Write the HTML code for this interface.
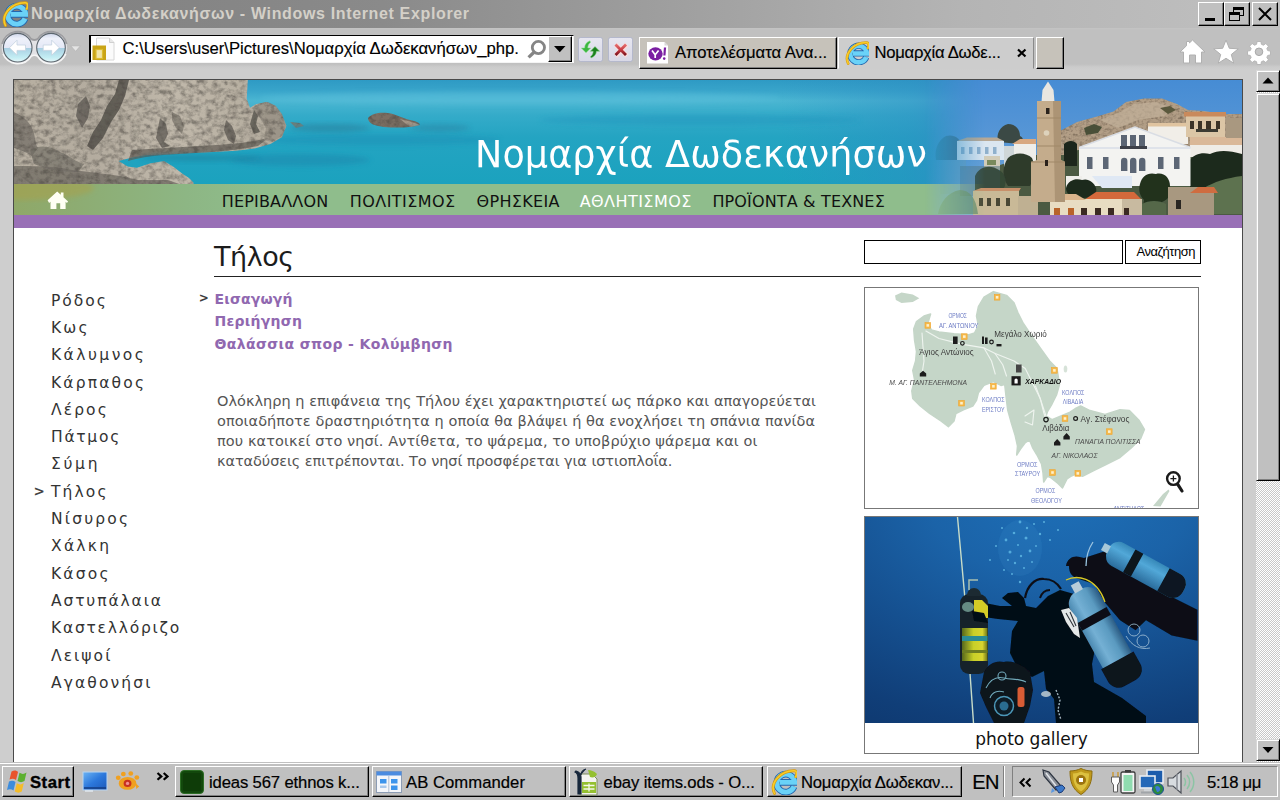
<!DOCTYPE html>
<html lang="el">
<head>
<meta charset="utf-8">
<title>Νομαρχία Δωδεκανήσων - Windows Internet Explorer</title>
<style>
*{box-sizing:border-box;margin:0;padding:0}
html,body{width:1280px;height:800px;overflow:hidden;background:#cecece}
body{position:relative;font-family:"Liberation Sans","DejaVu Sans",sans-serif;color:#000}
.abs{position:absolute}
/* ---------- window chrome ---------- */
#titlebar{left:0;top:0;width:1280px;height:28px;background:linear-gradient(90deg,#808080 0%,#8a8a8a 30%,#b4b4b4 75%,#c0c0c0 100%)}
#titletext{left:31px;top:4.2px;font:bold 16px/20px "Liberation Sans","DejaVu Sans",sans-serif;color:#d4d0c8;white-space:nowrap;letter-spacing:.65px}
.wbtn{top:2px;width:26px;height:24px;background:#c0c0c0;border:1px solid;border-color:#fff #000 #000 #fff;box-shadow:inset -1px -1px 0 #808080}
#toolbar{left:0;top:28px;width:1280px;height:42px;background:linear-gradient(180deg,#c4c4c4 0,#c0c0c0 2px,#c0c0c0 36px,#cbcbcb 39px,#cecece 42px)}
#addr{left:89px;top:35px;width:485px;height:28px;background:#fff;border:1px solid;border-width:1px 1px 1px 2px;border-color:#000 #f4f4f4 #f4f4f4 #000}
#addrtext{left:122.500px;top:38.600px;font:16.670px/20px "Liberation Sans","DejaVu Sans",sans-serif;white-space:nowrap;-webkit-text-stroke:.15px #000}
#addrdd{left:548px;top:36px;width:24px;height:26px;background:#c0c0c0;border:1px solid;border-color:#fff #000 #000 #fff;box-shadow:inset -1px -1px 0 #808080}
.tbtn{top:36.500px;width:25px;height:25px;background:linear-gradient(180deg,#e6e6f0,#d8d8e6);border:1px solid #b4b8cc;border-radius:2.500px}
.tab{top:37px;height:32px;background:#c6c2ba;border:1px solid;border-color:#fff #000 #000 #fff;box-shadow:inset -1px -1px 0 #808080}
.tabtext{top:42.700px;font:16.670px/20px "Liberation Sans","DejaVu Sans",sans-serif;white-space:nowrap;-webkit-text-stroke:.15px #000}
/* ---------- viewport ---------- */
#viewport{left:0;top:70px;width:1256px;height:692px;background:#cecece;overflow:hidden}
#page{left:13px;top:9px;width:1230px;height:700px;background:#fff;border:1px solid #4a4a4a;border-bottom:0}
#vscroll{left:1256px;top:70px;width:24px;height:692px;background-color:#fff;background-image:conic-gradient(#c8c8c8 25%,#fff 0 50%,#c8c8c8 0 75%,#fff 0);background-size:2px 2px}
.sbtn{left:0;width:24px;background:#c0c0c0;border:1px solid;border-color:#d8d8d8 #000 #000 #d8d8d8;box-shadow:inset 1px 1px 0 #fff,inset -1px -1px 0 #808080}
/* ---------- site ---------- */
.site{font-family:"DejaVu Sans","Liberation Sans",sans-serif}
#banner{left:0;top:0;width:1228px;height:104px;overflow:hidden}
#navbar{left:0;top:104px;width:1228px;height:31px;background:#8fbd8c}
#purple{left:0;top:135px;width:1228px;height:13px;background:#9970b6}
#sitetitle{left:461px;top:53.400px;font-size:36.500px;line-height:44px;color:#fff;white-space:nowrap}
.nav{top:111.800px;font-size:16px;line-height:20px;color:#111;white-space:nowrap}
#h1{left:200px;top:159.400px;font-size:27px;line-height:36px;color:#1c1c1c;white-space:nowrap;letter-spacing:-.45px}
#hr{left:200px;top:196px;width:987px;height:1px;background:#222}
.sub{left:200.500px;font-weight:bold;font-size:14px;line-height:20px;color:#9068b0;white-space:nowrap}
.side{left:37px;font-size:15.500px;line-height:20px;color:#333;letter-spacing:2.1px;white-space:nowrap}
#para{left:203px;top:311.200px;width:640px;white-space:nowrap;font-size:14.5px;line-height:20px;color:#555}
#search{left:850px;top:160px;width:259px;height:24px;border:1px solid #000;background:#fff}
#sbtn{left:1111px;top:160px;width:76px;height:24px;border:1px solid #000;background:#fff;font:13px/21px "Liberation Sans",sans-serif;text-align:left;padding-left:10.500px;letter-spacing:-.47px;white-space:nowrap}
#mapbox{left:850px;top:207px;width:335px;height:222px;border:1px solid #777;background:#fff;overflow:hidden}
#photobox{left:850px;top:436px;width:335px;height:238px;border:1px solid #777;background:#fff;overflow:hidden}
#caption{left:0;top:211.100px;width:333px;text-align:center;font-size:17px;line-height:22px;color:#111}
/* ---------- taskbar ---------- */
#taskbar{left:0;top:762px;width:1280px;height:38px;background:#c0c0c0;border-top:1px solid #c0c0c0;box-shadow:inset 0 1px 0 #fff}
.tbut{top:766px;height:31px;background:#c0c0c0;border:1px solid;border-color:#fff #000 #000 #fff;box-shadow:inset -1px -1px 0 #808080}
.ttext{top:772px;font:16.670px/22px "Liberation Sans","DejaVu Sans",sans-serif;white-space:nowrap;-webkit-text-stroke:.2px #000}
#tray{left:1012px;top:766px;width:266px;height:31px;border:1px solid;border-color:#808080 #fff #fff #808080}
</style>
</head>
<body>
<!-- ======= TITLE BAR ======= -->
<div id="titlebar" class="abs"></div>
<svg class="abs" style="left:1.500px;top:1px" width="26" height="26" viewBox="0 0 24 24"><path d="M21.3 16.2A8.3 8.3 0 1 1 21.9 12.4L8 12.4" fill="none" stroke="#2467ae" stroke-width="6.2"/><path d="M21.3 16.2A8.3 8.3 0 1 1 21.9 12.4L8 12.4" fill="none" stroke="#6ad2f8" stroke-width="4.5"/><path d="M3.2 22.6C-1.5 13 9 1.2 21.6 1.6c2.6.3 2.4 3 1.3 5.6" fill="none" stroke="#d89a10" stroke-width="2.6" stroke-linecap="round"/><path d="M3.2 22.6C-1.5 13 9 1.2 21.6 1.6c2.6.3 2.4 3 1.3 5.6" fill="none" stroke="#f8cc28" stroke-width="1.5" stroke-linecap="round"/></svg>
<div id="titletext" class="abs">Νομαρχία Δωδεκανήσων - Windows Internet Explorer</div>
<div class="abs wbtn" style="left:1198px"><svg class="abs" style="left:0;top:0" width="24" height="22" viewBox="0 0 24 22"><rect x="6" y="15" width="10" height="3" fill="#000"/></svg></div>
<div class="abs wbtn" style="left:1224px"><svg class="abs" style="left:0;top:0" width="24" height="22" viewBox="0 0 24 22"><g fill="none" stroke="#000"><rect x="8.5" y="4.5" width="10" height="8"/><path d="M8 5.5h11M8 6.5h11" /><rect x="4.500" y="9.500" width="10" height="8" fill="#c0c0c0"/><path d="M4 10.500h11M4 11.500h11"/></g></svg></div>
<div class="abs wbtn" style="left:1252px"><svg class="abs" style="left:0;top:0" width="24" height="22" viewBox="0 0 24 22"><path d="M6 5l12 12M18 5L6 17" stroke="#000" stroke-width="2" fill="none"/></svg></div>
<!-- ======= TOOLBAR ======= -->
<div id="toolbar" class="abs"></div>
<svg class="abs" style="left:0;top:30px" width="90" height="38" viewBox="0 30 90 38">
 <defs>
  <linearGradient id="glass" x1="0" y1="0" x2="0" y2="1"><stop offset="0" stop-color="#cfd6ea"/><stop offset=".18" stop-color="#eef1fa"/><stop offset=".5" stop-color="#e4e8f6"/><stop offset=".52" stop-color="#a9cfe2"/><stop offset=".85" stop-color="#c4eef4"/><stop offset="1" stop-color="#e6f6f8"/></linearGradient>
 </defs>
 <path d="M17.700 31.700a16 16 0 0 1 13.500 7.500q3.200 1.800 6.400 0a16 16 0 1 1 0 17q-3.200-1.800-6.400 0a16 16 0 1 1-13.500-24.500z" fill="#e6e6e9" opacity=".9"/>
 <path d="M2.200 44a16 16 0 0 1 29-4.800q3.200 1.800 6.400 0a16 16 0 0 1 29 4.800" fill="none" stroke="#8e8e92" stroke-width="2" opacity=".75"/>
 <path d="M3 54a16 16 0 0 0 28.200 2.200q3.200-1.800 6.400 0a16 16 0 0 0 28.200-2.200" fill="none" stroke="#fafafa" stroke-width="1.600" opacity=".9"/>
 <circle cx="17.700" cy="47.700" r="14.300" fill="url(#glass)" stroke="#5c666e" stroke-width="1.100"/>
 <circle cx="51" cy="47.700" r="14.300" fill="url(#glass)" stroke="#5c666e" stroke-width="1.100"/>
 <path d="M9.500 47.700l7.500-7.500v4.800h8.500v5.400H17v4.800z" fill="#fff" stroke="#c4d2e0" stroke-width=".8"/>
 <path d="M59.200 47.700l-7.500-7.500v4.800h-8.500v5.400h8.500v4.800z" fill="#fff" stroke="#c4d2e0" stroke-width=".8"/>
 <path d="M70.700 45.800h9.800l-4.900 5.600z" fill="#e4e4e4" stroke="#b4b4b4" stroke-width=".8"/>
</svg>
<div id="addr" class="abs"></div>
<svg class="abs" style="left:91px;top:37px" width="26" height="24" viewBox="0 0 26 24"><path d="M5.500 1h13l4.500 4.500V23h-17.500z" fill="#fbfbfb" stroke="#d8d8d8"/><path d="M18.500 1v4.500H23" fill="#e8e8e8" stroke="#d0d0d0"/><rect x="1.500" y="8.500" width="13.500" height="14.500" fill="#c9a416"/><rect x="5" y="12.500" width="6.500" height="9" fill="#f0e4a8" stroke="#dcbc30" stroke-width="1.200"/></svg>
<div id="addrtext" class="abs">C:\Users\user\Pictures\Νομαρχία Δωδεκανήσων_php.</div>
<svg class="abs" style="left:524px;top:38px" width="24" height="24" viewBox="0 0 24 24"><circle cx="14.400" cy="9.500" r="6.100" fill="none" stroke="#858585" stroke-width="2.800"/><path d="M10 14.200L4.600 19.400" stroke="#858585" stroke-width="3.300" stroke-linecap="butt"/></svg>
<div id="addrdd" class="abs"><svg class="abs" style="left:0;top:0" width="22" height="24" viewBox="0 0 22 24"><path d="M5 9h11.500l-5.750 6.200z" fill="#000"/></svg></div>
<div class="abs tbtn" style="left:578px"><svg class="abs" style="left:0;top:0" width="23" height="23" viewBox="0 0 23 23"><path d="M11 2.800C7.500 4 5.600 6.800 5.600 10H2.300l4.700 4.800L11.700 10H8.800c0-2.400.9-4.400 2.700-5.600z" fill="#3cb640" stroke="#8fe08f" stroke-width=".5"/><path d="M12 20c3.500-1.200 5.400-3.800 5.400-6.700h3.300L16 8.600l-4.700 4.700h2.900c0 2.200-.9 4-2.700 5.200z" fill="#1c801e" stroke="#7fd07f" stroke-width=".5"/></svg></div>
<div class="abs tbtn" style="left:608px"><svg class="abs" style="left:0;top:0" width="23" height="23" viewBox="0 0 23 23"><defs><linearGradient id="rx" x1="0" y1="0" x2="0" y2="1"><stop offset="0" stop-color="#e87878"/><stop offset=".5" stop-color="#c83c44"/><stop offset="1" stop-color="#6c0c18"/></linearGradient></defs><path d="M6.500 6.500l11.500 11.500M18 6.500L6.500 18" stroke="#f8dcdc" stroke-width="4.600" stroke-linecap="butt"/><path d="M5.500 7.500l2-2 4.250 4.250L16 5.500l2 2-4.250 4.250L18 16l-2 2-4.250-4.250L7.500 18l-2-2 4.250-4.250z" fill="url(#rx)"/></svg></div>
<div class="abs tab" style="left:639px;width:198px"></div>
<svg class="abs" style="left:646px;top:41px" width="24" height="24" viewBox="0 0 24 24"><path d="M1 1h17.500l3.500 3.500V22.500H1z" fill="#fff"/><path d="M18.500 1v3.500H22z" fill="#d8d8d8"/><ellipse cx="9.500" cy="12.800" rx="7.200" ry="6.600" fill="#7b1fa2"/><path d="M6 9.500l3.200 4.200v3.200M12.600 9.500L9.200 13.700" stroke="#fff" stroke-width="1.700" fill="none"/><path d="M19 6.500l-.6 8" stroke="#7b1fa2" stroke-width="2.200"/><circle cx="18.200" cy="17.600" r="1.300" fill="#7b1fa2"/></svg>
<div class="abs tabtext" style="left:675px;letter-spacing:-.05px">Αποτελέσματα Ανα...</div>
<div class="abs tab" style="left:838px;width:196px;background:#cdcdcd;border-color:#fff #8a8a8a transparent #fff;box-shadow:none"></div>
<svg class="abs" style="left:845px;top:41px" width="24" height="24" viewBox="0 0 24 24"><path d="M21.3 16.2A8.3 8.3 0 1 1 21.9 12.4L8 12.4" fill="none" stroke="#2467ae" stroke-width="6.2"/><path d="M21.3 16.2A8.3 8.3 0 1 1 21.9 12.4L8 12.4" fill="none" stroke="#6ad2f8" stroke-width="4.5"/><path d="M3.2 22.6C-1.5 13 9 1.2 21.6 1.6c2.6.3 2.4 3 1.3 5.6" fill="none" stroke="#d89a10" stroke-width="2.6" stroke-linecap="round"/><path d="M3.2 22.6C-1.5 13 9 1.2 21.6 1.6c2.6.3 2.4 3 1.3 5.6" fill="none" stroke="#f8cc28" stroke-width="1.5" stroke-linecap="round"/></svg>
<div class="abs tabtext" style="left:874.500px;letter-spacing:-.28px">Νομαρχία Δωδε...</div>
<svg class="abs" style="left:1016px;top:47px" width="12" height="12" viewBox="0 0 12 12"><path d="M2 2.500l7.500 7M9.500 2.500l-7.500 7" stroke="#000" stroke-width="2.200"/></svg>
<div class="abs tab" style="left:1036px;width:28px"></div>
<svg class="abs" style="left:1176px;top:36px" width="100" height="32" viewBox="1176 36 100 32"><g fill="#fff" stroke="#b0b0b0" stroke-width="1">
 <path d="M1192.500 40l12.500 12h-3.500v11h-6v-8h-6v8h-6V52h-3.500l6.500-6.300V41.500h3v1.400z"/>
 <path d="M1226 40l3.300 8.300 9 .5-7 5.700 2.400 8.700-7.700-4.900-7.700 4.900 2.400-8.700-7-5.700 9-.5z"/>
 <g transform="translate(1259 51.800) scale(.87) translate(-1259 -51.800)"><path d="M1256.800 40h4.400l.6 3.200 2.300 1 2.700-1.900 3.100 3.100-1.900 2.700 1 2.300 3.200.6v4.400l-3.200.6-1 2.300 1.900 2.700-3.100 3.100-2.700-1.900-2.300 1-.6 3.200h-4.400l-.6-3.200-2.300-1-2.700 1.900-3.100-3.100 1.900-2.700-1-2.300-3.200-.6v-4.400l3.200-.6 1-2.300-1.900-2.700 3.100-3.100 2.700 1.900 2.300-1z"/></g></g>
 <circle cx="1259" cy="51.800" r="3.800" fill="#c4c4c4" stroke="#a8a8a8"/></svg>
<!-- ======= VIEWPORT ======= -->
<div id="viewport" class="abs">
 <div id="page" class="abs site">
  <div id="banner" class="abs" style="height:135px">
<svg class="abs" style="left:0;top:0" width="1228" height="135" viewBox="14 80 1228 135">
 <defs>
  <linearGradient id="sea" x1="0" y1="0" x2="0" y2="1">
   <stop offset="0" stop-color="#2e9ac4"/><stop offset=".1" stop-color="#38a4ca"/><stop offset=".2" stop-color="#4bb6d2"/><stop offset=".34" stop-color="#34abc9"/><stop offset=".55" stop-color="#24a4c2"/><stop offset="1" stop-color="#1ba2be"/>
  </linearGradient>
  <linearGradient id="seaR" x1="0" y1="0" x2="1" y2="0">
   <stop offset="0" stop-color="#2e8cc4" stop-opacity="0"/><stop offset=".6" stop-color="#2e8cc4" stop-opacity=".45"/><stop offset="1" stop-color="#3f86c8" stop-opacity="1"/>
  </linearGradient>
  <linearGradient id="navg" x1="0" y1="0" x2="1" y2="0">
   <stop offset="0" stop-color="#8fa868"/><stop offset=".05" stop-color="#8dac72"/><stop offset=".14" stop-color="#8db684"/><stop offset=".2" stop-color="#8fbd8c"/><stop offset="1" stop-color="#8fbd8c"/>
  </linearGradient>
  <linearGradient id="fadeL" x1="0" y1="0" x2="1" y2="0">
   <stop offset="0" stop-color="#fff" stop-opacity="0"/><stop offset="1" stop-color="#fff" stop-opacity="1"/>
  </linearGradient>
  <mask id="vmask" maskUnits="userSpaceOnUse" x="900" y="80" width="342" height="135"><rect x="925" y="80" width="60" height="135" fill="url(#fadeL)"/><rect x="985" y="80" width="257" height="135" fill="#fff"/></mask>
  <linearGradient id="sky" x1="0" y1="0" x2="0" y2="1"><stop offset="0" stop-color="#468cd4"/><stop offset=".5" stop-color="#5a98d6"/><stop offset="1" stop-color="#7fb0dc"/></linearGradient>
  <linearGradient id="rockg" x1="0" y1="0" x2="1" y2="0"><stop offset="0" stop-color="#b8b0a2"/><stop offset=".3" stop-color="#b4ac9f"/><stop offset=".6" stop-color="#c0b8aa"/><stop offset="1" stop-color="#b2aa9c"/></linearGradient>
  <filter id="rough2" x="0" y="0" width="100%" height="100%"><feTurbulence type="fractalNoise" baseFrequency=".3 .35" numOctaves="2" seed="3" result="n"/><feColorMatrix in="n" type="matrix" values="0 0 0 0 0  0 0 0 0 0  0 0 0 0 0  1.800 1.500 0 0 -1.450" result="a"/><feFlood flood-color="#5a4a3a" flood-opacity=".7"/><feComposite operator="in" in2="a" result="dark"/><feComposite in="dark" in2="SourceGraphic" operator="atop"/></filter>
  <clipPath id="navclip"><rect x="14" y="184" width="1228" height="31"/></clipPath>
  <filter id="b1" x="-5%" y="-5%" width="110%" height="110%"><feGaussianBlur stdDeviation=".7"/></filter>
  <filter id="rough" x="0" y="0" width="100%" height="100%"><feTurbulence type="fractalNoise" baseFrequency=".16 .2" numOctaves="3" seed="7" result="n"/><feColorMatrix in="n" type="matrix" values="0 0 0 0 0  0 0 0 0 0  0 0 0 0 0  1.900 1.600 0 0 -1.450" result="a"/><feFlood flood-color="#4e4943" flood-opacity=".68"/><feComposite operator="in" in2="a" result="dark"/><feGaussianBlur in="SourceGraphic" stdDeviation=".7" result="src"/><feComposite in="dark" in2="src" operator="atop"/></filter>
  <filter id="b3" x="-10%" y="-10%" width="120%" height="120%"><feGaussianBlur stdDeviation="2.500"/></filter>
 </defs>
 <!-- sea -->
 <rect x="14" y="80" width="1228" height="104" fill="url(#sea)"/>
 <rect x="780" y="80" width="220" height="104" fill="url(#seaR)"/>
 <g filter="url(#b3)" opacity=".5"><ellipse cx="520" cy="98" rx="260" ry="6" fill="#5cc0dc"/><ellipse cx="380" cy="140" rx="120" ry="5" fill="#1c8fb6"/><ellipse cx="700" cy="120" rx="160" ry="5" fill="#2496be"/><ellipse cx="300" cy="160" rx="70" ry="6" fill="#1a86ac"/></g>
 <!-- rocks -->
 <g filter="url(#rough)">
  <path d="M13 79H247.900l-1.200 19.700 3.300 9 5.800-3.400 10.200-2.300 9 3.500 6.900 9 4.500 11.300-4.500 11.400-11.400 6.800-15.800 4.500-18.200 2.300-22.600 1.100-22.700 1.100-22.600 1.200-22.700 1.100-13.600 2.300-13.600 3.400 9.100 5.600 9.100 1.200 13.600-4.600 13.500-2.200 9.100 5.600 9.100 6.800 6.800 4.500 4.500 4.600V185H13z" fill="url(#rockg)"/>
  <path d="M119 80l-4 14-8 12-6 14-8 12-6 14 6 4 10-12 8-16 8-12 6-14 4-16z" fill="#4e4a45" opacity=".8"/>
  <path d="M86 96l-8 8-2 12 6 12 6-10 2-12z" fill="#5a5650" opacity=".75"/>
  <path d="M14 112c8 4 14 8 18 16 4 8 2 14 6 20l-6 8c-6-4-12-6-18-8z" fill="#6f6b64" opacity=".7"/>
  <path d="M30 150c10-6 22-4 30 2 10 4 16 10 24 12l-6 8c-14 0-30-2-44-8z" fill="#6b675f" opacity=".6"/>
  <path d="M160 118l6 6 2 10-4 8 6 4-8 2-6-10 2-10z" fill="#55514b" opacity=".7"/>
  <path d="M172 112l8 4 4 10-2 8-6-6-4-8z" fill="#6a655d" opacity=".6"/>
  <path d="M226 120l6 6 4 10-2 8-6-4-4-10z" fill="#55514b" opacity=".7"/>
  <path d="M132 150c28-2 56-3 84-5 18-1 36-3 52-7l-10 8c-30 6-62 7-94 9-14 1-26 3-36 6z" fill="#5f5b54" opacity=".7"/>
  <path d="M14 166c20 0 40 0 58 4 18 2 34 4 48 6l18 4 30 0 14 5H14z" fill="#6f6a62" opacity=".75"/>
  <path d="M252 108l6-4 10-2 8 4 6 8 4 12-4 10-10 6-8-2 2-12-6-10z" fill="#938c80" opacity=".7"/>
  <path d="M254 110l4 6-2 8 4 8-6 2-4-10z" fill="#4c4843" opacity=".7"/>
  <path d="M368 118c4-5 12-6 20-5 8 1 14 5 22 7 6 1 10 3 10 5-10 3-24 3-36 2-8-1-16-3-16-9z" fill="#7c6e62"/>
  <path d="M400 119l12 3 8 3-10 2z" fill="#b0a090" opacity=".8"/>
  <path d="M290 122l10 1 4 3-8 2z" fill="#8a7a6c" opacity=".8"/>
 </g>
 <g filter="url(#b3)" opacity=".55"><ellipse cx="330" cy="128" rx="40" ry="4" fill="#2a7f9c"/><ellipse cx="440" cy="128" rx="30" ry="3.500" fill="#2a86a6"/><ellipse cx="200" cy="158" rx="60" ry="3" fill="#1b7f9c"/></g>
 <!-- nav bar -->
 <rect x="14" y="184" width="1228" height="31" fill="url(#navg)"/>
 <g clip-path="url(#navclip)"><ellipse cx="24" cy="188" rx="70" ry="12" fill="#a8a04c" opacity=".55" filter="url(#b3)"/></g>
 <!-- village -->
 <g mask="url(#vmask)">
  <rect x="920" y="80" width="322" height="135" fill="url(#sky)"/>
  <g filter="url(#b1)">
   <g filter="url(#rough2)"><path d="M1058 132l19-10 20-5.500 16.500-5 12.500-9.500 18-3.500h18l15 5.500 11 6 16 1 20 3h18v60H1058z" fill="#b29e86"/></g>
   <path d="M1100 120l20-8 14-8 22-2 18 6-10 8-26 4-20 8z" fill="#c2b09a" opacity=".7"/>
   <path d="M1084 128l10-4 8 3-4 6-12 2z" fill="#4a5038"/><path d="M1160 108l10-2 6 4-8 4z" fill="#5a583c"/>
   <path d="M1000 215v-50l30-10h34l14-5h112l52 8v57z" fill="#4c5a42"/>
   <!-- far houses -->
   <rect x="1148" y="124" width="40" height="20" fill="#f1eee8"/><rect x="1148" y="123" width="38" height="3.500" fill="#e0c4a0"/>
   <rect x="1186" y="116" width="39" height="21" fill="#dcc6a6"/><rect x="1184" y="112" width="42" height="4.500" fill="#c98a5c"/>
   <g fill="#3a3026"><rect x="1190" y="121" width="4" height="8"/><rect x="1198" y="121" width="4" height="8"/><rect x="1206" y="121" width="5" height="8"/><rect x="1216" y="121" width="4" height="8"/></g>
   <rect x="1196" y="129" width="22" height="3" fill="#3c3a30"/>
   <rect x="1190" y="137" width="52" height="8" fill="#dab898"/><rect x="1190" y="145" width="52" height="12" fill="#efece6"/>
   <rect x="1226" y="118" width="16" height="20" fill="#a99880"/>
   <!-- dark trees right -->
   <path d="M1190 160c4-6 12-8 20-6 8-4 18-4 32 0v34h-52z" fill="#1d2a1c"/>
   <path d="M1186 214c0-14 6-24 18-26 10-6 22-10 38-12v38z" fill="#5d7250"/>
   <!-- mansion -->
   <path d="M1079 147.500L1135 127l55.500 20.500V186H1079z" fill="#f3f3f1"/>
   <path d="M1079 147.500L1135 127l55.500 20.500" fill="none" stroke="#d9dde4" stroke-width="1.500"/>
   <rect x="1079" y="147" width="111.500" height="2" fill="#dfe3ea"/>
   <g fill="#5c6674"><rect x="1121" y="135" width="6" height="14"/><rect x="1130" y="135" width="6" height="14"/><rect x="1139" y="135" width="6" height="14"/>
   <rect x="1087" y="157" width="5.500" height="12"/><rect x="1103" y="157" width="5.500" height="12"/><rect x="1158" y="157" width="5.500" height="12"/><rect x="1174" y="157" width="5.500" height="12"/>
   <path d="M1121 171v-10a3.200 3.200 0 0 1 6.400 0v10zM1130 173v-12a3.200 3.200 0 0 1 6.400 0v12zM1139 171v-10a3.200 3.200 0 0 1 6.400 0v10z"/></g>
   <rect x="1120" y="146" width="27" height="3" fill="#3c4048"/>
   <path d="M1092 176h40v12h-30z" fill="#dfe8f4"/>
   <rect x="1066" y="176" width="16" height="12" fill="#efeeea"/>
   <!-- trees mid -->
   <path d="M1064 144c4-4 10-4 13 0v22h-13z" fill="#1c261c"/>
   <path d="M1066 188c2-8 10-10 16-8 6-2 12 2 14 8 2 6-4 10-12 10-10 0-18-2-18-10z" fill="#1f2c1e"/>
   <path d="M1140 184c2-8 8-12 16-10 8-2 14 4 14 12 2 8-2 14-8 16l2 12h-22l2-14c-4-4-6-10-4-16z" fill="#22301f"/>
   <path d="M1142 204c6-4 18-4 24 0v11h-24z" fill="#54684a"/>
   <!-- low buildings -->
   <rect x="1168" y="187" width="46" height="28" fill="#a89880"/><path d="M1190 193l8-6h16l4 6z" fill="#cf6c40"/><rect x="1176" y="200" width="5" height="9" fill="#2c2620"/>
   <path d="M1084 200l12-8h38l8 8z" fill="#d4693a"/>
   <rect x="1050" y="199" width="74" height="16" fill="#e8dcc2"/><rect x="1122" y="199" width="20" height="16" fill="#c8baa0"/>
   <path d="M1048 200l14-6h14l10 6z" fill="#d9b48c"/>
   <g fill="#b8642c"><rect x="1054" y="208" width="6" height="7"/><rect x="1068" y="208" width="6" height="7"/></g><g fill="#3a2c24"><rect x="1081" y="208" width="6" height="7"/><rect x="1095" y="208" width="6" height="7"/><rect x="1108" y="208" width="6" height="7"/><rect x="1124" y="208" width="5" height="7"/></g>
   <!-- left part -->
   <path d="M936 160c-2-10 2-20 10-24 8-2 14 2 16 10l-2 14z" fill="#2c4a50" opacity=".55"/>
   <path d="M998 142c-2-8 2-16 10-18 8 0 12 6 12 12 4 2 4 6 0 8z" fill="#3b4a44"/>
   <rect x="957" y="141" width="47" height="19" fill="#dbe6f0"/><path d="M957 141l10-3.500h30l7 3.500z" fill="#b8a894"/>
   <g fill="#8fb0cc"><rect x="961" y="147" width="3.500" height="7"/><rect x="969" y="147" width="3.500" height="7"/><rect x="977" y="147" width="3.500" height="7"/><rect x="985" y="147" width="3.500" height="7"/><rect x="993" y="147" width="3.500" height="7"/></g>
   <rect x="1004" y="146" width="12" height="22" fill="#cfd6d8"/>
   <rect x="1014" y="144" width="22" height="17" fill="#eeeeea"/><path d="M1012 144l8-5h16v5z" fill="#d8a880"/>
   <rect x="984" y="156" width="16" height="14" fill="#d2ccb8"/><rect x="987" y="160" width="9" height="5" fill="#7a8a5c"/>
   <path d="M940 160h26v10h-6v24h-20z" fill="#6fa2b8" opacity=".5"/>
   <path d="M960 166h40v30h-40z" fill="#5a7a84" opacity=".55"/>
   <path d="M1008 158c6-6 18-6 24 0 4 8 2 20-2 28h-22c-6-8-6-20 0-28z" fill="#2d3b2c"/>
   <path d="M975 176c4-10 16-12 24-6 8 4 8 14 4 20h-28z" fill="#344634" opacity=".9"/>
   <rect x="973" y="191" width="46" height="24" fill="#c9b997"/><path d="M973 191l8-3h40l-2 3z" fill="#c8906a"/>
   <g fill="#4a4636"><rect x="979" y="198" width="4" height="8"/><rect x="987" y="198" width="4" height="8"/><rect x="996" y="198" width="4" height="8"/><rect x="1006" y="198" width="4" height="8"/></g>
   <path d="M938 214c2-12 10-22 22-24 10 0 16 8 18 24z" fill="#5c8468" opacity=".7"/>
   <rect x="1018" y="196" width="20" height="19" fill="#bfb092"/>
   <!-- tower -->
   <path d="M1041.500 102l1-12 5.500-8.500 5.500 8.500 1 12z" fill="#e9e6e0"/>
   <path d="M1037 101h24v59l4 2v40h-34v-40l6-2z" fill="#c4ac8c"/>
   <path d="M1053 101h8v59l4 2v40h-10z" fill="#a48c6e" opacity=".75"/>
   <path d="M1037 118h24M1037 146h24M1031 162h34" stroke="#a08868" stroke-width="1"/>
   <rect x="1046" y="108" width="3.500" height="6" fill="#2c241c"/><rect x="1045" y="160" width="3" height="6" fill="#2c241c"/><circle cx="1046.500" cy="133" r="2.800" fill="#ddd2bc"/>
  </g>
 </g>
 <!-- nav home icon -->
 <path d="M47.600 200.300l9.600-8.800 3.600 3.300v-2.200h2.700v4.700l4.600 4.200-1.200 1.400-1.300-1.200v7.400h-5.400v-5.800h-3.800v5.800h-5.900v-7.400l-1.400 1.200z" fill="#fffff4"/>
</svg>
  </div>
  <div id="purple" class="abs"></div>
  <div id="sitetitle" class="abs" style="letter-spacing:.1px">Νομαρχία Δωδεκανήσων</div>
  <div class="abs nav" style="left:207.800px;letter-spacing:.16px">ΠΕΡΙΒΑΛΛΟΝ</div>
  <div class="abs nav" style="left:335.800px;letter-spacing:.44px">ΠΟΛΙΤΙΣΜΟΣ</div>
  <div class="abs nav" style="left:462.600px;letter-spacing:.33px">ΘΡΗΣΚΕΙΑ</div>
  <div class="abs nav" style="left:565.700px;letter-spacing:.44px;color:#fff">ΑΘΛΗΤΙΣΜΟΣ</div>
  <div class="abs nav" style="left:698.400px;letter-spacing:.15px">ΠΡΟΪΟΝΤΑ &amp; ΤΕΧΝΕΣ</div>
  <div id="h1" class="abs">Τήλος</div>
  <div id="hr" class="abs"></div>
  <div id="search" class="abs"></div>
  <div id="sbtn" class="abs">Αναζήτηση</div>
  <div class="abs sub" style="left:184.800px;top:208px;color:#3c3c3c;font-size:12px">&gt;</div>
  <div class="abs sub" style="top:208.800px;letter-spacing:.18px">Εισαγωγή</div>
  <div class="abs sub" style="top:231.300px;letter-spacing:.27px">Περιήγηση</div>
  <div class="abs sub" style="top:253.600px;letter-spacing:.38px">Θαλάσσια σπορ - Κολύμβηση</div>
  <div id="para" class="abs"><span style="letter-spacing:.02px">Ολόκληρη η επιφάνεια της Τήλου έχει χαρακτηριστεί ως πάρκο και απαγορεύεται</span><br><span style="letter-spacing:.05px">οποιαδήποτε δραστηριότητα η οποία θα βλάψει ή θα ενοχλήσει τη σπάνια πανίδα</span><br><span style="letter-spacing:.09px">που κατοικεί στο νησί. Αντίθετα, το ψάρεμα, το υποβρύχιο ψάρεμα και οι</span><br><span style="letter-spacing:-.08px">καταδύσεις επιτρέπονται. Το νησί προσφέρεται για ιστιοπλοΐα.</span></div>
  <div class="abs side" style="top:210.6px;letter-spacing:1.96px">Ρόδος</div>
  <div class="abs side" style="top:237.9px;letter-spacing:2.12px">Κως</div>
  <div class="abs side" style="top:265.2px;letter-spacing:2.45px">Κάλυμνος</div>
  <div class="abs side" style="top:292.5px;letter-spacing:2.17px">Κάρπαθος</div>
  <div class="abs side" style="top:319.8px;letter-spacing:2.09px">Λέρος</div>
  <div class="abs side" style="top:347.1px;letter-spacing:1.72px">Πάτμος</div>
  <div class="abs side" style="top:374.4px;letter-spacing:2.68px">Σύμη</div>
  <div class="abs side" style="left:19.500px;top:401.2px;font-weight:bold;font-size:13.500px;letter-spacing:0;color:#444">&gt;</div>
  <div class="abs side" style="top:401.7px;letter-spacing:2.11px">Τήλος</div>
  <div class="abs side" style="top:429.0px;letter-spacing:2.16px">Νίσυρος</div>
  <div class="abs side" style="top:456.3px;letter-spacing:2.26px">Χάλκη</div>
  <div class="abs side" style="top:483.6px;letter-spacing:2.18px">Κάσος</div>
  <div class="abs side" style="top:510.9px;letter-spacing:1.87px">Αστυπάλαια</div>
  <div class="abs side" style="top:538.2px;letter-spacing:1.77px">Καστελλόριζο</div>
  <div class="abs side" style="top:565.5px;letter-spacing:2.04px">Λειψοί</div>
  <div class="abs side" style="top:592.8px;letter-spacing:2.11px">Αγαθονήσι</div>
  <div id="mapbox" class="abs">
<svg class="abs" style="left:0;top:0" width="333" height="220" viewBox="865 288 333 220">
 <defs><filter id="mb" x="-5%" y="-5%" width="110%" height="110%"><feGaussianBlur stdDeviation=".45"/></filter></defs>
 <g filter="url(#mb)">
 <g fill="#c5d6c8">
  <path d="M993.4 291.6 1006.5 295.4 1014 302.9 1017.75 312.25 1023.4 323.5 1030.9 334.75 1040.25 347.9 1049.6 361 1057 368.5 1059.5 384.5 1056.5 395 1052 404 1047.5 411.5 1046 416 1052 419.7 1061 416 1070 412.2 1075 408.75 1080.6 406 1090 410.6 1105 414.4 1120 409.7 1129.4 410.6 1138.75 420 1144.4 429.4 1140.6 438.75 1131.25 448 1120 457.5 1105 465 1093.75 470.6 1082.5 476.25 1075 474.4 1071.5 476 1067 479 1062.5 488 1058 483.5 1050.5 477.5 1047.5 476 1043.7 482 1043 473 1041.5 464 1037 455 1032.5 447.5 1029.5 440 1025 443 1020.5 449 1016.7 455 1017.5 446 1015.2 435.5 1011.5 423.5 1007.7 410 1006.2 398 1004.7 384.5 1000.9 385.4 993.4 381.6 984 385.4 978.4 392.9 976.5 400.4 972.75 406 963.4 409.75 955.9 413.5 954 421 948.4 426.6 940.9 421 929.6 413.5 920.25 406 912.75 398.5 911.8 391 914.6 379.75 912.75 370.4 915.6 361 916.5 351.6 914.6 340.4 913.7 329 916.5 321.6 924 316 930.6 314 927.75 323.5 931.5 330 939 331.9 954 333.8 969 334.75 974.6 332.9 978.4 325.4 976.5 316 978.4 306.6 984 297.25z" stroke="#c5d6c8" stroke-width="1.500" stroke-linejoin="round"/>
  <path d="M895 295.400l6.500-2.800 11.250 1.800 6.550 3.800-6.550 3.800-11.250.900-5.600-2.900z"/>
  <path d="M1153 506l10-12 5.500-4.500 1 1.500-7 12-2 3.500z"/>
  <ellipse cx="1065.500" cy="369" rx="1.800" ry="3.500" opacity=".7"/>
 </g>
 <g fill="none" stroke="#f4f8f4" stroke-width="1.100" stroke-linecap="round" stroke-linejoin="round" opacity=".9">
  <path d="M925.900 331l13.100 7.500 22.500 5.600 22.500 3.800 11.250 5.600 18.750 7.500 11.250 7.500 7.500 15 7.500 15 3.750 15 2 5.500"/>
  <path d="M984 347.900l7.500 13.100 3.750 13"/><path d="M922 333l2 28-2 13"/><path d="M995 353.500l7.750 11.250 3.750 11.250"/>
  <path d="M1035.500 386l4.500 12 3 9 3 9"/><path d="M1025 416l9-6-1.500 15-7.500-3"/>
 </g>
 <g fill="#f6b94a" stroke="#f2a52c" stroke-width=".6">
  <rect x="994.300" y="294.500" width="5.600" height="5.600"/><rect x="925" y="322.600" width="5.600" height="5.600"/><rect x="961.500" y="333.800" width="5.600" height="5.600"/><rect x="1051.600" y="367.600" width="5.600" height="5.600"/><rect x="990.600" y="383.500" width="5.600" height="5.600"/><rect x="958.700" y="400.400" width="5.600" height="5.600"/><rect x="1062.200" y="415.700" width="5.600" height="5.600"/><rect x="1106.500" y="428.800" width="5.600" height="5.600"/><rect x="1049.700" y="469.700" width="5.600" height="5.600"/><rect x="1075" y="470.600" width="5.600" height="5.600"/>
 </g>
 <g fill="#fdf0cc"><rect x="995.800" y="296" width="2.600" height="2.600"/><rect x="926.500" y="324.100" width="2.600" height="2.600"/><rect x="963" y="335.300" width="2.600" height="2.600"/><rect x="1053.100" y="369.100" width="2.600" height="2.600"/><rect x="992.100" y="385" width="2.600" height="2.600"/><rect x="960.200" y="401.900" width="2.600" height="2.600"/><rect x="1063.700" y="417.200" width="2.600" height="2.600"/><rect x="1108" y="430.300" width="2.600" height="2.600"/><rect x="1051.200" y="471.200" width="2.600" height="2.600"/><rect x="1076.500" y="472.100" width="2.600" height="2.600"/></g>
 <g fill="#1a1a1a">
  <rect x="953" y="336.500" width="4.600" height="7.500"/><rect x="982" y="336.500" width="2" height="7.500"/><rect x="985" y="337.500" width="2.600" height="6.500"/>
  <rect x="996.500" y="344" width="5" height="2.400"/><rect x="1016" y="364.500" width="5.600" height="8" fill="#444"/>
  <rect x="1011.500" y="376.200" width="9.200" height="9.200"/>
  <path d="M919.800 376.500v-3l3.200-2.800 3.200 2.800v3z"/>
  <path d="M1063.400 439.500v-3l3.200-3.400 3.200 3.400v3zM1054 445.500v-3l3.200-3.400 3.200 3.400v3z"/>
 </g>
 <g fill="#c5d6c8" stroke="#1a1a1a" stroke-width="1.200"><circle cx="962.400" cy="343.300" r="1.800"/><circle cx="991.500" cy="342" r="1.800"/><circle cx="1046" cy="419.600" r="2.200"/><circle cx="1075.600" cy="418.500" r="1.900"/></g>
 <path d="M1014.500 383.500v-3.500a1.600 1.600 0 0 1 3.200 0v3.500z" fill="#fff"/>
 <g font-family="'Liberation Sans','DejaVu Sans',sans-serif" lengthAdjust="spacingAndGlyphs">
  <g fill="#6d7cc4" font-size="6.500">
   <text x="948.400" y="317.900" textLength="18.600" lengthAdjust="spacingAndGlyphs">ΟΡΜΟΣ</text><text x="939" y="327.600" textLength="39.400" lengthAdjust="spacingAndGlyphs">ΑΓ. ΑΝΤΩΝΙΟΥ</text>
   <text x="982" y="402.200" textLength="22.600" lengthAdjust="spacingAndGlyphs">ΚΟΛΠΟΣ</text><text x="982" y="411.600" textLength="22.600" lengthAdjust="spacingAndGlyphs">ΕΡΙΣΤΟΥ</text>
   <text x="1061.900" y="394.700" textLength="22.500" lengthAdjust="spacingAndGlyphs">ΚΟΛΠΟΣ</text><text x="1062.800" y="404" textLength="20.600" lengthAdjust="spacingAndGlyphs">ΛΙΒΑΔΙΑ</text>
   <text x="1016.900" y="466.900" textLength="20.600" lengthAdjust="spacingAndGlyphs">ΟΡΜΟΣ</text><text x="1015" y="476.200" textLength="25.300" lengthAdjust="spacingAndGlyphs">ΣΤΑΥΡΟΥ</text>
   <text x="1035.600" y="493" textLength="19.700" lengthAdjust="spacingAndGlyphs">ΟΡΜΟΣ</text><text x="1031" y="502.500" textLength="30.900" lengthAdjust="spacingAndGlyphs">ΘΕΟΛΟΓΟΥ</text>
   <text x="1113.400" y="510.500" textLength="31" lengthAdjust="spacingAndGlyphs">ΑΝΤΙΤΗΛΟΣ</text>
  </g>
  <g fill="#3c3c3c" font-size="8.500">
   <text x="994.300" y="336.600" textLength="52.500" lengthAdjust="spacingAndGlyphs">Μεγάλο Χωριό</text>
   <text x="919.300" y="355" textLength="54.400" lengthAdjust="spacingAndGlyphs">Άγιος Αντώνιος</text>
   <text x="1080.600" y="421.500" textLength="48.800" lengthAdjust="spacingAndGlyphs">Αγ. Στέφανος</text>
   <text x="1042.200" y="431.200" textLength="27.200" lengthAdjust="spacingAndGlyphs">Λιβάδια</text>
  </g>
  <g fill="#4a4a4a" font-size="6.800" font-style="italic">
   <text x="889.300" y="385" textLength="77.700" lengthAdjust="spacingAndGlyphs">Μ. ΑΓ. ΠΑΝΤΕΛΕΗΜΟΝΑ</text>
   <text x="1075" y="444" textLength="65.600" lengthAdjust="spacingAndGlyphs">ΠΑΝΑΓΙΑ ΠΟΛΙΤΙΣΣΑ</text>
   <text x="1051.600" y="457.900" textLength="45.900" lengthAdjust="spacingAndGlyphs">ΑΓ. ΝΙΚΟΛΑΟΣ</text>
  </g>
  <text x="1025.200" y="383.900" textLength="35.800" lengthAdjust="spacingAndGlyphs" fill="#111" font-size="7" font-style="italic" font-weight="bold">ΧΑΡΚΑΔΙΟ</text>
 </g>
 </g>
 <circle cx="1173.400" cy="478.600" r="6.300" fill="#fff" stroke="#1a1a1a" stroke-width="2.400"/>
 <path d="M1170.400 478.600h6M1173.400 475.600v6" stroke="#1a1a1a" stroke-width="1.300"/>
 <path d="M1177.600 484.200l4.400 6.800" stroke="#1a1a1a" stroke-width="3.200" stroke-linecap="round"/>
</svg>
  </div>
  <div id="photobox" class="abs">
<svg class="abs" style="left:0;top:0" width="333" height="206" viewBox="865 517 333 206">
 <defs>
  <radialGradient id="wat" cx="1060" cy="490" r="300" gradientUnits="userSpaceOnUse" gradientTransform="translate(1060 490) scale(1.500 1) translate(-1060 -490)"><stop offset="0" stop-color="#1e70b8"/><stop offset=".3" stop-color="#1b63a8"/><stop offset=".55" stop-color="#155090"/><stop offset=".8" stop-color="#103e78"/><stop offset="1" stop-color="#0d356a"/></radialGradient>
  <linearGradient id="tk1" x1="0" y1="0" x2="1" y2="0"><stop offset="0" stop-color="#4a88b0"/><stop offset=".3" stop-color="#74b0d4"/><stop offset=".7" stop-color="#5a9ac0"/><stop offset="1" stop-color="#2c5c84"/></linearGradient>
  <linearGradient id="tk2" x1="0" y1="0" x2="0" y2="1"><stop offset="0" stop-color="#3688b8"/><stop offset=".35" stop-color="#52a8d8"/><stop offset="1" stop-color="#2a6c9c"/></linearGradient>
  <linearGradient id="ytk" x1="0" y1="0" x2="1" y2="0"><stop offset="0" stop-color="#56681c"/><stop offset=".45" stop-color="#c8d028"/><stop offset=".8" stop-color="#d8d430"/><stop offset="1" stop-color="#6c7418"/></linearGradient>
  <filter id="db" x="-5%" y="-5%" width="110%" height="110%"><feGaussianBlur stdDeviation=".7"/></filter>
 </defs>
 <rect x="865" y="517" width="333" height="206" fill="url(#wat)"/>
 <g filter="url(#db)">
  <!-- bubbles -->
  <g fill="#6cc4ec" opacity=".75"><circle cx="1020" cy="522" r="1.400"/><circle cx="1027" cy="528" r="1.200"/><circle cx="1014" cy="533" r="1.300"/><circle cx="1034" cy="524" r="1"/><circle cx="1006" cy="540" r="1.400"/><circle cx="1018" cy="545" r="1.100"/><circle cx="1026" cy="538" r="1.500"/><circle cx="1010" cy="552" r="1.500"/><circle cx="1036" cy="546" r="1"/><circle cx="1021" cy="556" r="1.200"/><circle cx="1030" cy="551" r="1.400"/><circle cx="1015" cy="563" r="1.200"/><circle cx="1040" cy="534" r="1.200"/><circle cx="1024" cy="568" r="1.100"/><circle cx="1008" cy="560" r="1"/><circle cx="1044" cy="522" r="1"/><circle cx="1050" cy="540" r="1"/><circle cx="996" cy="546" r="1"/><circle cx="1012" cy="574" r="1"/><circle cx="1020" cy="582" r="1.200"/><circle cx="1004" cy="570" r="1"/><circle cx="1002" cy="528" r="1"/><circle cx="1032" cy="562" r="1"/><circle cx="1058" cy="530" r="1"/><circle cx="990" cy="560" r="1"/></g>
  <ellipse cx="1020" cy="548" rx="22" ry="28" fill="#3c9cdc" opacity=".13"/>
  <!-- rope -->
  <path d="M957.500 517l7.500 82 4 60 4.500 64" stroke="#c8dcc8" stroke-width="1.400" fill="none"/>
  <!-- diver 2 -->
  <path d="M1066 566c1-8 8-11 14-9l4 1 23-7.500 28.600 15.500 20.400 23 41.400 20.700v31l-25.700-5.100-25.700-15.400-10.400 10-15.600-10-15.300-18-10.300-18-15.400-5.200c-8-2-10-7-10-13z" fill="#080e18"/>
  <g transform="rotate(28.600 1146 569.800)"><rect x="1103" y="557" width="86" height="26" rx="11" fill="url(#tk2)"/><rect x="1127" y="557" width="9" height="26" fill="#0a121c"/><path d="M1166 557h12a11 11 0 0 1 11 11v4a11 11 0 0 1-11 11h-12z" fill="#0c1620"/><rect x="1097" y="566" width="7" height="8" fill="#a8c8d8"/></g>
  <path d="M1086 566c0-10 3-18 7-24" stroke="#9cc4e0" stroke-width="1.300" fill="none"/>
  <!-- diver 1 -->
  <path d="M1002 598l6-5 10-1 6 6 2 8 10 2 12-12 12-6 14 4 12 20 10 30-4 20 2 18 28 16 24 18v7h-90l-2-24-8-10-2-18-12 6-14-8-8-16 2-22 6-10-20-2-28-4-10-6 1-7 9-2 30 6 12 0-10-8z" fill="#060a12"/>
  <path d="M1025 598c2-12 10-20 19-19 8 0 14 5 17 10" stroke="#0a1018" stroke-width="2.200" fill="none"/>
  <path d="M1040 598c2-6 6-8 10-8" stroke="#0a1018" stroke-width="2" fill="none"/>
  <!-- yellow hose -->
  <path d="M1066 580c10-5 30-4 39 22" stroke="#d8c828" stroke-width="1.300" fill="none"/>
  <!-- tank 1 -->
  <g transform="rotate(-29 1103.400 635.400)"><rect x="1087" y="584" width="33" height="104" rx="13" fill="url(#tk1)"/><rect x="1087" y="612" width="33" height="9" fill="#0a1018"/><path d="M1085 664h37v14a12 12 0 0 1-12 12h-13a12 12 0 0 1-12-12z" fill="#0a121c"/><rect x="1099" y="576" width="9" height="9" fill="#b8ccd8"/></g>
  <!-- logo patch -->
  <path d="M1061 610l8-2 8 10 3 20-6-4-8-12z" fill="#e4e8e8"/><path d="M1066 613l8 14M1070 612l6 14" stroke="#30363c" stroke-width="1.100"/>
  <!-- hoses -->
  <g fill="none" stroke="#a8c4d8" stroke-width="1" opacity=".8"><circle cx="1134" cy="630" r="6"/><circle cx="1143" cy="641" r="6"/><path d="M1126 636c6 10 14 14 24 12"/></g>
  <!-- yellow tank -->
  <rect x="960" y="594" width="28" height="80" rx="9" fill="#16242c"/>
  <path d="M974 600h8l6 6v12h-14z" fill="#d4cc28"/>
  <rect x="962" y="628" width="25.500" height="33" fill="url(#ytk)"/>
  <rect x="962" y="636" width="25.500" height="5" fill="#2c8c94"/><rect x="962" y="650" width="25.500" height="3" fill="#6c7c20"/>
  <path d="M967 596c0-5 3-8 7-8s7 3 7 8z" fill="#1c2c30"/><path d="M969 590v-10h9" stroke="#a8c0b0" stroke-width="1.500" fill="none"/>
  <ellipse cx="968" cy="607" rx="6" ry="5" fill="#88b8a8" opacity=".7"/>
  <path d="M972 611l12 2 4 10-14-2z" fill="#060a12"/>
  <!-- camera rig -->
  <path d="M984 672c4-8 12-12 20-10 10-2 20 4 26 10l3 18-3 16-6 17h-30l-8-16-6-14z" fill="#0a121c"/>
  <g fill="none" stroke="#8cd0e0" stroke-width="1.100" opacity=".8"><path d="M986 688c4-8 10-12 18-10 8 2 14 0 22 4"/><path d="M990 698c2-6 8-8 14-6"/><circle cx="1002" cy="676" r="4"/></g>
  <circle cx="1004" cy="706" r="9.500" fill="#0e1a26" stroke="#4c98b8" stroke-width="1.500"/><circle cx="1004" cy="706" r="4.500" fill="#2c6c90"/>
  <rect x="1017.500" y="687" width="7" height="20" rx="2.500" fill="#d85c34"/>
  <path d="M1056 690l4 10-2 10 3 10" stroke="#9cb8c4" stroke-width="1.400" fill="none" stroke-dasharray="2 1.500"/>
  <ellipse cx="1046" cy="694" rx="5" ry="3" fill="#c8d4d8" opacity=".8"/>
 </g>
</svg>
   <div id="caption" class="abs">photo gallery</div>
  </div>
 </div>
</div>
<div id="vscroll" class="abs">
 <div class="abs sbtn" style="top:0;height:22px"><svg class="abs" style="left:0;top:0" width="22" height="20" viewBox="0 0 22 20"><path d="M5.500 12.500h11l-5.500-6z" fill="#000"/></svg></div>
 <div class="abs sbtn" style="top:23px;height:388px"></div>
 <div class="abs sbtn" style="top:669px;height:22px"><svg class="abs" style="left:0;top:0" width="22" height="20" viewBox="0 0 22 20"><path d="M5.500 7h11l-5.500 6z" fill="#000"/></svg></div>
</div>
<!-- ======= TASKBAR ======= -->
<div id="taskbar" class="abs"></div>
<div class="abs tbut" style="left:2px;width:72px"></div>
<svg class="abs" style="left:5px;top:769px" width="24" height="26" viewBox="0 0 24 26"><path d="M6.500 2.500c3-1.500 5-1 6.500.5l-2 8c-2-1.500-4-1.800-6.500-.5z" fill="#e8542c"/><path d="M14.500 3.800c2.500 1.500 4.500 1.500 7-.3l-2 8.500c-2.500 1.500-4.500 1.500-7 0z" fill="#5cb030"/><path d="M4 12.500c2.500-1.300 4.500-1 6.500.5l-2 8.500c-2-1.500-4-1.800-6.500-.5z" fill="#3c8cdc"/><path d="M11.800 14.300c2.500 1.500 4.500 1.500 7-.3l-2 8.500c-2.500 1.500-4.500 1.500-7 0z" fill="#f4bc28"/></svg>
<div class="abs ttext" style="left:30px;font-weight:bold;letter-spacing:.5px;-webkit-text-stroke:.35px #000">Start</div>
<svg class="abs" style="left:81.500px;top:771px" width="26" height="22" viewBox="0 0 26 22"><defs><linearGradient id="dsk" x1="0" y1="0" x2="1" y2="1"><stop offset="0" stop-color="#6cb4f4"/><stop offset=".5" stop-color="#2c78dc"/><stop offset="1" stop-color="#1c58b8"/></linearGradient></defs><rect x="1" y="1" width="24" height="18" fill="url(#dsk)" stroke="#b8d4f0" stroke-width="1"/><path d="M2 17h22" stroke="#143c80" stroke-width="1.500"/><path d="M3 20h8" stroke="#e8f0f8" stroke-width="1.200"/></svg>
<svg class="abs" style="left:114.500px;top:771px" width="26" height="20.500" viewBox="0 0 28 24" preserveAspectRatio="none"><g fill="#f0a020"><circle cx="3.500" cy="8" r="2.600"/><circle cx="9" cy="3.500" r="2.600"/><circle cx="17" cy="3" r="2.600"/><circle cx="23.500" cy="7.500" r="2.600"/><ellipse cx="13.500" cy="14.500" rx="9.500" ry="7.500"/><path d="M22 14l4 4-3 3z"/></g><circle cx="13.500" cy="14.500" r="4.200" fill="#c83020"/><circle cx="13.500" cy="14.500" r="1.800" fill="#f09090"/></svg>
<svg class="abs" style="left:156px;top:772px" width="14" height="9" viewBox="0 0 14 9"><path d="M1.500 1l3.800 3.400-3.800 3.400M7.700 1l3.800 3.400-3.800 3.400" stroke="#000" stroke-width="2.200" fill="none"/></svg>
<div class="abs tbut" style="left:175px;width:194px"></div>
<svg class="abs" style="left:180px;top:770px" width="24" height="24" viewBox="0 0 24 24"><rect x=".5" y=".5" width="23" height="23" rx="3.500" fill="#12480c" stroke="#2c6c24"/><rect x="3" y="3" width="18" height="18" rx="2" fill="#0e3c08"/></svg>
<div class="abs ttext" style="left:209px;letter-spacing:-.14px">ideas 567 ethnos k...</div>
<div class="abs tbut" style="left:372px;width:194px"></div>
<svg class="abs" style="left:376px;top:770px" width="26" height="24" viewBox="0 0 26 24"><rect x=".5" y="1.500" width="25" height="21" fill="#f4f6fa" stroke="#8c9cb4"/><rect x=".5" y="1.500" width="25" height="4" fill="#4c8ce0"/><g fill="#3c94ec"><rect x="4" y="9" width="6.500" height="4.500"/><rect x="15" y="9" width="6.500" height="4.500"/><rect x="15" y="15.500" width="6.500" height="4.500"/><rect x="4" y="15.500" width="6.500" height="2.500" fill="#a8c8ec"/></g><path d="M12.800 6v16" stroke="#b4c0d0"/></svg>
<div class="abs ttext" style="left:406px;letter-spacing:.04px">AB Commander</div>
<div class="abs tbut" style="left:569px;width:194px"></div>
<svg class="abs" style="left:574px;top:768px" width="26" height="28" viewBox="0 0 26 28"><path d="M6 6h12l5 5v16H6z" fill="#f4f4f0" stroke="#7c8c5c"/><path d="M14 2c3 0 6 1 9 4-1 3-4 4-7 3z" fill="#94c030"/><rect x="8" y="14" width="14" height="11" fill="#94c030"/><path d="M9.500 17.500h11M9.500 21h11M15 15.500v8" stroke="#f4f8e8" stroke-width="1.300"/><path d="M2 3c3 1 5 3 5 6v17H4V10C4 7 3 5 1 4zM12 1c-3 1-5 3-5 6" fill="#18283c" stroke="#18283c" stroke-width="1.200"/></svg>
<div class="abs ttext" style="left:603.500px;letter-spacing:-.12px">ebay items.ods - O...</div>
<div class="abs tbut" style="left:767px;width:195px"></div>
<svg class="abs" style="left:771px;top:769px" width="26" height="26" viewBox="0 0 24 24"><path d="M21.3 16.2A8.3 8.3 0 1 1 21.9 12.4L8 12.4" fill="none" stroke="#2467ae" stroke-width="6.2"/><path d="M21.3 16.2A8.3 8.3 0 1 1 21.9 12.4L8 12.4" fill="none" stroke="#6ad2f8" stroke-width="4.5"/><path d="M3.2 22.6C-1.5 13 9 1.2 21.6 1.6c2.6.3 2.4 3 1.3 5.6" fill="none" stroke="#d89a10" stroke-width="2.6" stroke-linecap="round"/><path d="M3.2 22.6C-1.5 13 9 1.2 21.6 1.6c2.6.3 2.4 3 1.3 5.6" fill="none" stroke="#f8cc28" stroke-width="1.5" stroke-linecap="round"/></svg>
<div class="abs ttext" style="left:801px;letter-spacing:-.22px">Νομαρχία Δωδεκαν...</div>
<div class="abs ttext" style="left:972.300px;font-size:20px;top:770.800px;letter-spacing:-.6px">EN</div>
<div class="abs" style="left:1003px;top:766px;width:2px;height:31px;border-left:1px solid #808080;border-right:1px solid #fff"></div>
<div id="tray" class="abs"></div>
<svg class="abs" style="left:1019px;top:777px" width="14" height="12" viewBox="0 0 14 12"><path d="M5.500 1.500l-4 4 4 4M11.500 1.500l-4 4 4 4" stroke="#000" stroke-width="2" fill="none"/></svg>
<svg class="abs" style="left:1040px;top:768px" width="28" height="28" viewBox="0 0 28 28"><path d="M3 2l6 2 12 14-2 3-3 1L4 8z" fill="#8c9098" stroke="#2c3440" stroke-width="1.200"/><path d="M6 5l10 13" stroke="#e0e4e8" stroke-width="1.500"/><path d="M15 19l4 6 3-1 3-4-3-3z" fill="#3c78c8" stroke="#1c3c78"/><path d="M12 20l-1 5 4-2z" fill="#5c98e0"/></svg>
<svg class="abs" style="left:1068px;top:768px" width="26" height="28" viewBox="0 0 26 28"><path d="M2 3c4 0 8-1 11-2.500C16 2 20 3 24 3c0 10-2 18-11 23.500C4 21 2 13 2 3z" fill="#c09a1c" stroke="#8c6c0c"/><path d="M5 5.500c3 0 6-.8 8-2 2 1.200 5 2 8 2 0 8-2 14-8 18-6-4-8-10-8-18z" fill="#dcc040"/><circle cx="13" cy="12" r="5" fill="#9c7410"/><rect x="11" y="10" width="4" height="4" fill="#fff"/></svg>
<svg class="abs" style="left:1110px;top:768px" width="28" height="28" viewBox="0 0 28 28"><rect x="11" y="4" width="14" height="21" rx="1.500" fill="#f4f4f4" stroke="#3c3c3c" stroke-width="1.300"/><rect x="13.500" y="7" width="9" height="16" fill="#90dcb0"/><rect x="15" y="2" width="6" height="2.500" fill="#3c3c3c"/><path d="M3 4v5M8 4v5" stroke="#c8a050" stroke-width="1.800"/><path d="M1.500 9h8v5l-2 3v7h-4v-7l-2-3z" fill="#fcfcfc" stroke="#5c5c5c"/></svg>
<svg class="abs" style="left:1138px;top:768px" width="28" height="28" viewBox="0 0 28 28"><rect x="9" y="2" width="16" height="13" fill="#1c5cac" stroke="#e8ecf0" stroke-width="1.600"/><rect x="14" y="16" width="6" height="2" fill="#c0c4c8"/><rect x="2" y="8" width="15" height="12" fill="#2468b8" stroke="#e8ecf0" stroke-width="1.600"/><rect x="6" y="21" width="7" height="2.500" fill="#d0d4d8"/><rect x="3" y="23.500" width="13" height="2" fill="#a0a4a8"/><circle cx="20" cy="21" r="5.500" fill="#2c8c3c" stroke="#1c4c9c"/><path d="M17 19c2-2 4-1 5 1s-1 4-3 4" fill="#3c78d8"/></svg>
<svg class="abs" style="left:1166px;top:768px" width="30" height="28" viewBox="0 0 30 28"><path d="M2 10h5l8-7v22l-8-7H2z" fill="#d8dce0" stroke="#4c5058" stroke-width="1.200"/><path d="M11 6v16" stroke="#888c94" stroke-width="1.500"/><g fill="none" stroke="#8cc4a4" stroke-width="1.500"><path d="M18 10c2 2 2 6 0 8"/><path d="M21 7c3.500 4 3.500 10 0 14"/><path d="M24 4c5 6 5 14 0 20"/></g></svg>
<div class="abs ttext" style="left:1207px;letter-spacing:-.3px">5:18 μμ</div>
</body>
</html>
